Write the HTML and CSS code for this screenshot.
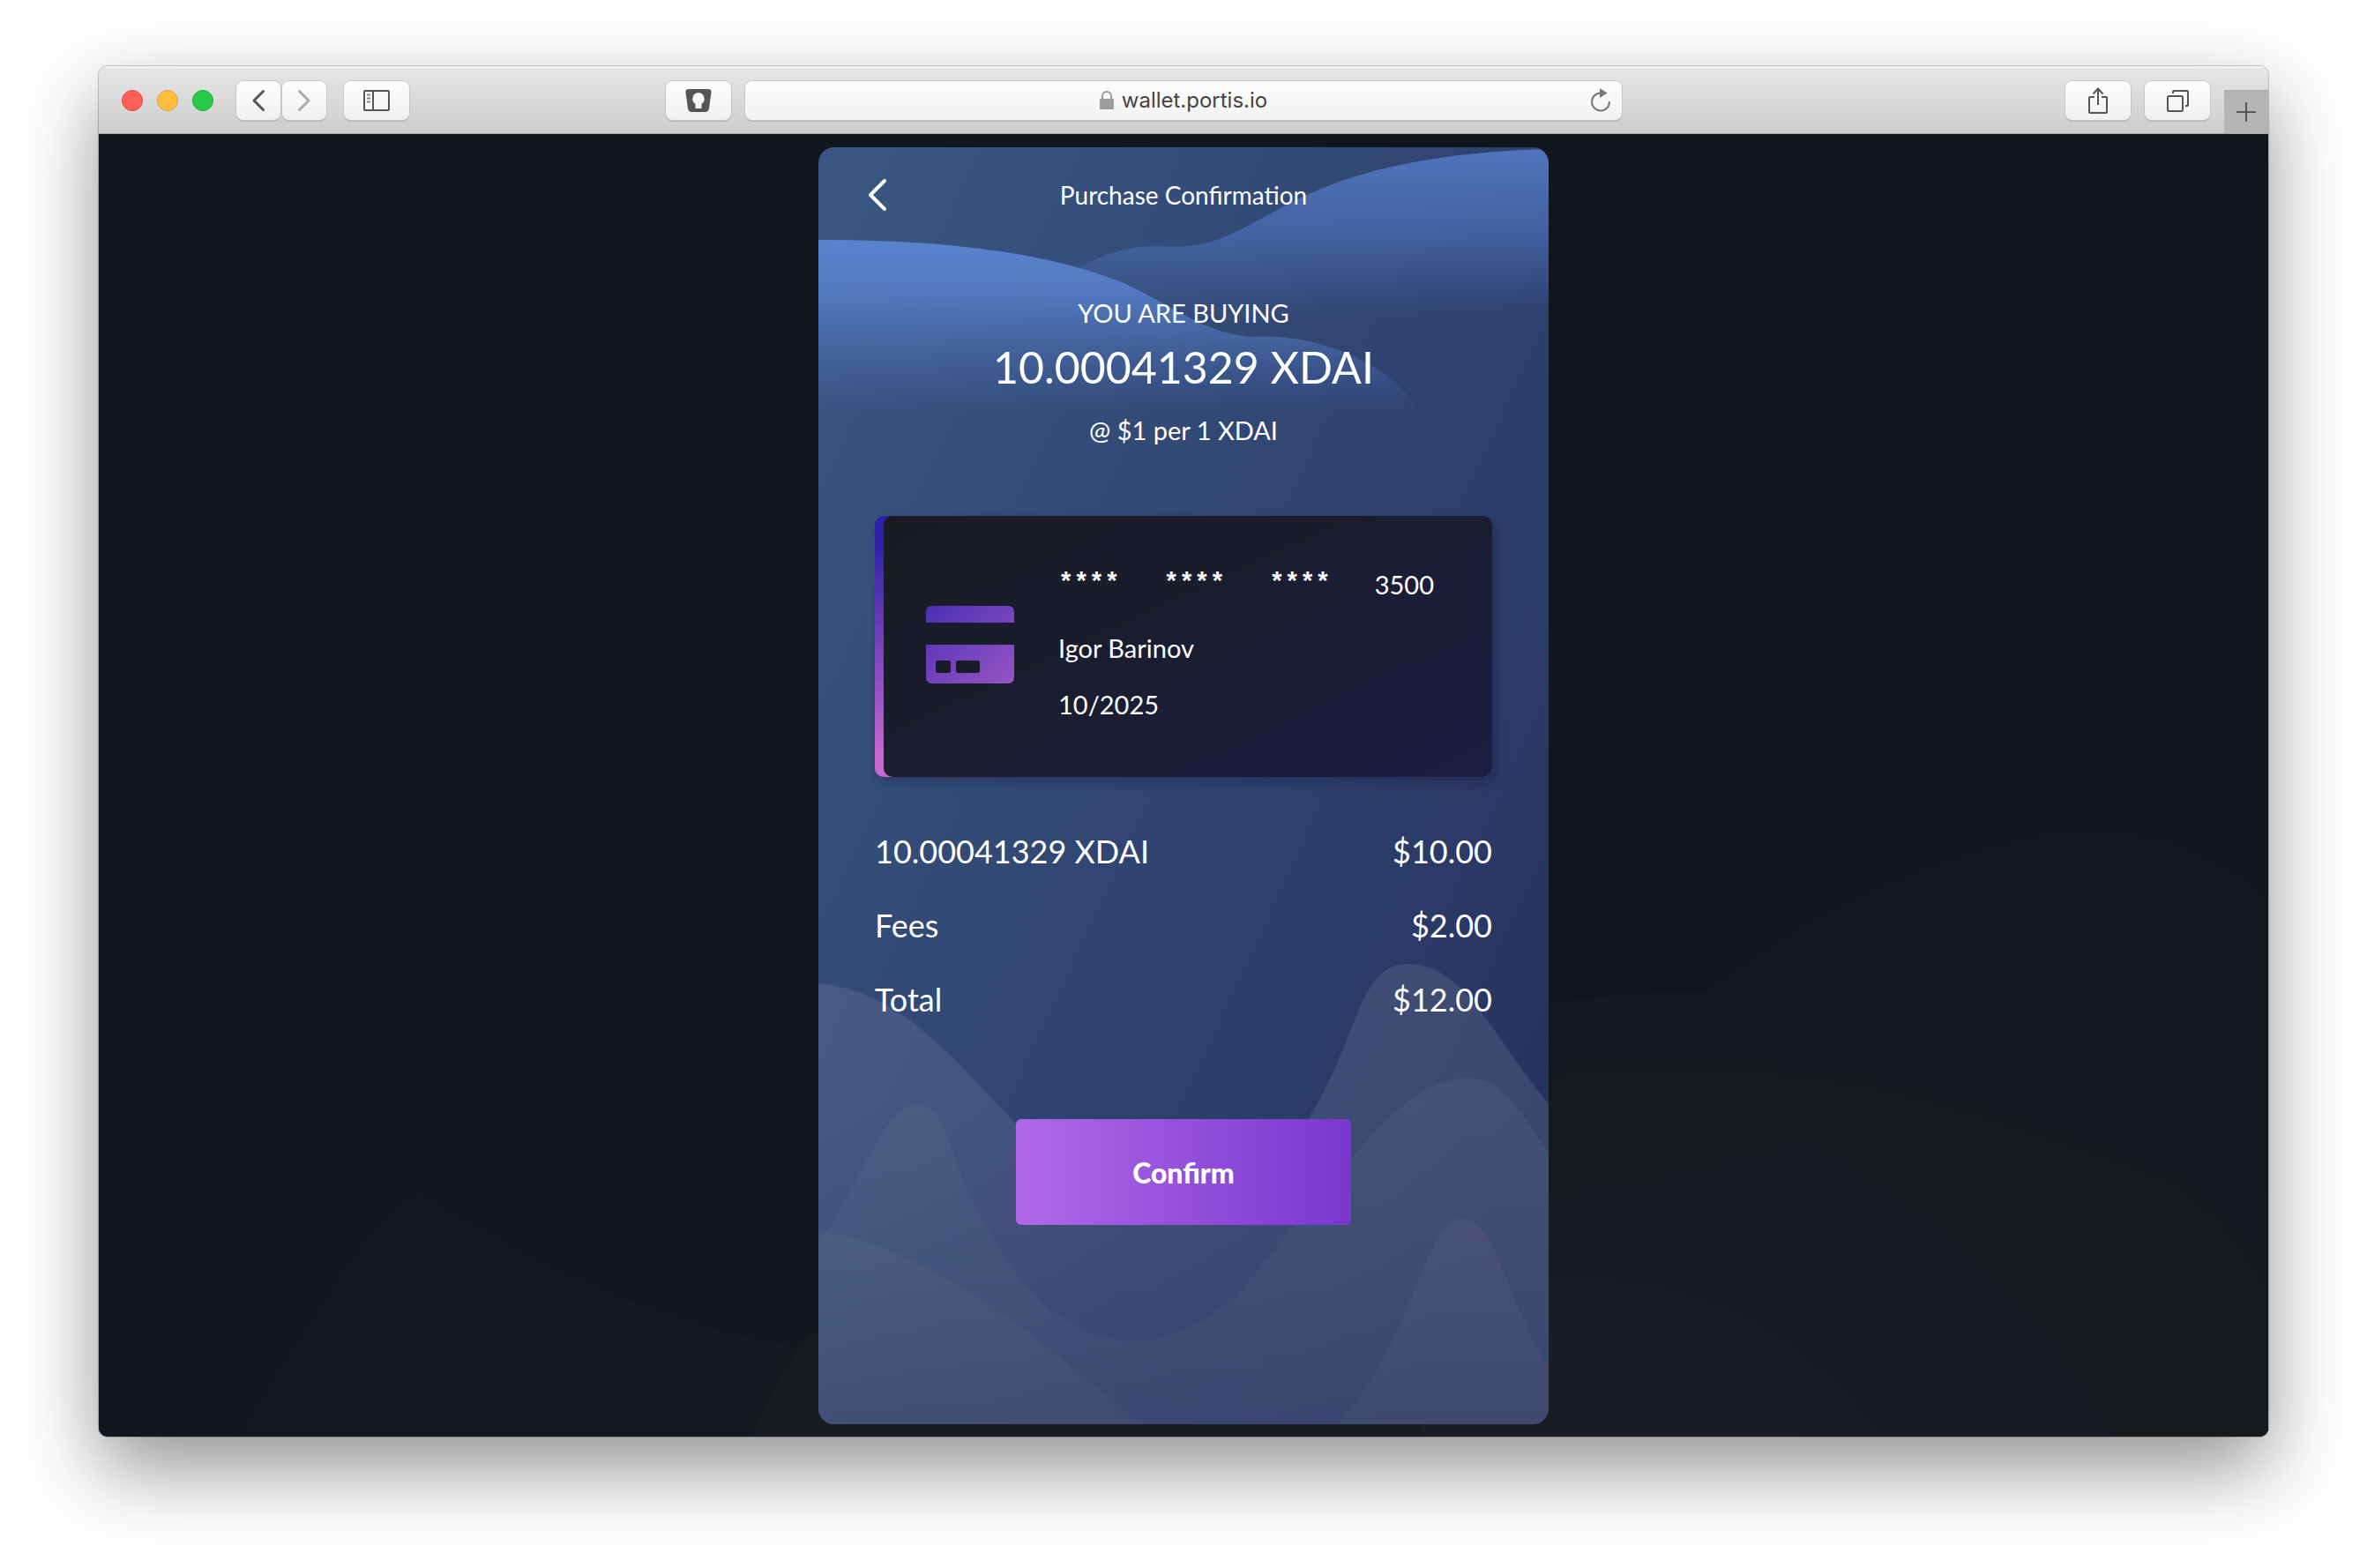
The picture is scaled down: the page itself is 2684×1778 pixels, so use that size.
FILE: index.html
```html
<!DOCTYPE html>
<html lang="en">
<head>
<meta charset="utf-8">
<meta name="viewport" content="width=device-width, initial-scale=1">
<title>Purchase Confirmation</title>
<link rel="stylesheet" href="styles.css">
</head>
<body>
<div class="window">
  <header class="toolbar">
    <div class="toolbar-left">
      <div class="lights">
        <button class="light light-close" aria-label="Close"></button>
        <button class="light light-min" aria-label="Minimize"></button>
        <button class="light light-max" aria-label="Zoom"></button>
      </div>
      <div class="nav">
        <button class="tool tool-nav" aria-label="Back"><svg width="16" height="26" viewBox="0 0 16 26"><path d="M13.500 2.500 3 13l10.500 10.500" class="stroke-nav"/></svg></button>
        <button class="tool tool-nav" aria-label="Forward" disabled><svg width="16" height="26" viewBox="0 0 16 26"><path d="M2.500 2.500 13 13 2.500 23.500" class="stroke-nav stroke-dim"/></svg></button>
      </div>
      <button class="tool" aria-label="Sidebar"><svg width="32" height="26" viewBox="0 0 32 26"><rect x="2" y="2" width="28" height="22" rx="1" class="stroke"/><path d="M12 2v22" class="stroke"/><path d="M5 6.500h4M5 10.500h4M5 14.500h4" class="stroke-thin"/></svg></button>
      <button class="tool tool-key" aria-label="Password manager"><svg width="30" height="26" viewBox="0 0 30 26"><path fill="#555" fill-rule="evenodd" d="M4 0h22q4 0 3.500 4l-2.500 18q-.6 4-4.500 4h-15q-3.900 0-4.500-4L.5 4Q0 0 4 0ZM15 4a7 7 0 0 0-3.500 12.800V22h7v-5.200A7 7 0 0 0 15 4Z"/></svg></button>
    </div>
    <div class="address">
      <label class="address-text">
        <svg width="16" height="22" viewBox="0 0 16 22" aria-label="Secure"><rect y="9" width="16" height="12" rx="1" fill="#9c9c9c"/><path d="M3 10V6a5 5 0 0 1 10 0v4" fill="none" stroke="#9c9c9c" stroke-width="2"/></svg>
        <input class="address-input" type="text" value="wallet.portis.io" aria-label="Address">
      </label>
      <button class="reload" aria-label="Reload"><svg width="24" height="28" viewBox="0 0 24 28"><path d="M12 5.500a10 10 0 1 0 10 9.500" fill="none" stroke="#777" stroke-width="2"/><path d="M11 0v11l8.500-5.500z" fill="#777"/></svg></button>
    </div>
    <div class="toolbar-right">
      <button class="tool" aria-label="Share"><svg width="24" height="32" viewBox="0 0 24 32"><path d="M8 12H3q-1 0-1 1v16q0 1 1 1h18q1 0 1-1V13q0-1-1-1h-5" class="stroke"/><path d="M12 21V3M6.500 8.500 12 2.500l5.500 6" class="stroke"/></svg></button>
      <button class="tool" aria-label="Tabs"><svg width="26" height="26" viewBox="0 0 26 26"><rect x="2" y="8" width="17" height="17" rx="1.500" class="stroke"/><path d="M8 5V3q0-1 1-1h15q1 0 1 1v15q0 1-1 1h-2" class="stroke"/></svg></button>
      <button class="new-tab" aria-label="New tab"><svg width="22" height="22" viewBox="0 0 22 22"><path d="M11 0v22M0 11h22" class="stroke"/></svg></button>
    </div>
  </header>

  <main class="page">
    <svg class="art" viewBox="0 0 2460 1478" preserveAspectRatio="none" aria-hidden="true">
      <path fill="#13171e" d="M1400 1300L1638 1112L1823 971C1890 920 1940 890 2009 858C2090 820 2180 789 2263 789C2340 789 2410 820 2460 867V1478H1400Z"/>
      <path fill="#14181f" d="M1400 1040Q1638 973 1813 973C1900 973 1950 980 2009 994C2080 1008 2140 1020 2194 1037C2250 1075 2290 1110 2326 1145Q2400 1220 2460 1311V1478H1400Z"/>
      <path fill="#14181f" d="M1638 1202Q1760 1185 1850 1160L2051 1093L2244 1006L2379 1117L2460 1202V1478H1638Z"/>
      <path fill="#171a1d" d="M1500 1130Q1620 1061 1712 1061C1780 1056 1840 1056 1903 1065Q1990 1072 2062 1093C2150 1115 2260 1150 2350 1188Q2420 1230 2460 1311V1478H1400Z"/>
      <path fill="#171a22" d="M1500 1215Q1740 1195 1850 1160L1934 1138C2000 1172 2060 1215 2114 1259Q2220 1350 2284 1478H1400Z"/>
      <path fill="#191c22" d="M1500 1300Q1638 1285 1770 1306Q1840 1322 1903 1362Q1970 1405 2024 1478H1400Z"/>
      <path fill="#1a1d24" d="M1500 1310Q1638 1310 1700 1332C1790 1360 1870 1400 1934 1478H1400Z"/>
      <path fill="#12161d" d="M0 1262C40 1215 80 1185 122 1166Q165 1142 213 1142Q262 1142 309 1166C360 1195 395 1218 438 1242C480 1268 510 1285 550 1302Q670 1355 791 1376L900 1390V1478H0Z"/>
      <path fill="#13161d" d="M432 1244Q490 1235 550 1217C640 1194 720 1180 816 1172H900V1400L791 1376Q670 1355 550 1302C510 1285 480 1268 432 1244Z"/>
      <path fill="#13171e" d="M159 1478C190 1420 225 1370 256 1322Q310 1230 363 1199C395 1218 410 1228 438 1242C480 1268 510 1285 550 1302Q670 1355 791 1376L900 1390V1478Z"/>
      <path fill="#14181f" d="M416 1478C440 1410 470 1350 508 1283L550 1302Q670 1355 791 1376L900 1390V1478Z"/>
      <path fill="#181b1f" d="M740 1478Q760 1420 810 1360H1500V1478Z"/>
    </svg>

    <section class="wallet">
      <svg class="art" viewBox="0 0 828 1448" preserveAspectRatio="none" aria-hidden="true">
        <defs>
          <linearGradient id="right" gradientUnits="userSpaceOnUse" x1="0" y1="0" x2="0" y2="194"><stop offset="0" stop-color="#5075bd"/><stop offset=".5" stop-color="#4a6eb6" stop-opacity=".7"/><stop offset="1" stop-color="#426bb0" stop-opacity="0"/></linearGradient>
          <linearGradient id="left" gradientUnits="userSpaceOnUse" x1="0" y1="104" x2="0" y2="300"><stop offset="0" stop-color="#5983ce"/><stop offset=".3" stop-color="#567dc6" stop-opacity=".92"/><stop offset="1" stop-color="#4a70b8" stop-opacity="0"/></linearGradient>
          <linearGradient id="base" x1="0" y1="0" x2="0" y2="1"><stop offset=".3" stop-color="#34466f" stop-opacity="0"/><stop offset="1" stop-color="#303c68" stop-opacity=".5"/></linearGradient>
        </defs>
        <path fill="url(#right)" d="M240 196C262 150 320 112 382 112C400 112 420 114 442 108C492 92 518 68 561 51C630 20 720 5 828 2V200Z"/>
        <path fill="url(#left)" d="M0 105C150 105 260 120 344 153C400 178 440 214 496 215C540 213 575 223 605 236C640 252 665 272 682 302H0Z"/>
        <path fill="#8c92a8" fill-opacity=".21" d="M0 948C90 956 150 1030 222 1105C270 1158 330 1190 390 1190C450 1190 510 1170 556 1101C615 1005 612 926 669 926C730 926 760 1000 828 1085V1448H0Z"/>
        <path fill="#74889a" fill-opacity=".12" d="M0 1243C50 1175 75 1085 112 1085C150 1085 148 1160 190 1221C235 1312 300 1354 358 1354C470 1354 520 1230 604 1148C650 1090 695 1055 737 1055C778 1055 800 1100 828 1141V1448H0Z"/>
        <path fill="#8698a0" fill-opacity=".12" d="M0 1229C100 1237 230 1330 366 1448H0Z"/>
        <path fill="#8f7098" fill-opacity=".18" d="M588 1448C680 1350 685 1215 729 1215C770 1215 780 1310 828 1382V1448Z"/>
        <path fill="url(#base)" d="M0 926H828V1448H0Z"/>
      </svg>

      <div class="wallet-body">
        <div class="wallet-head">
          <button class="back" aria-label="Back"><svg width="22" height="36" viewBox="0 0 22 36"><path d="M19 2 3 18l16 16" fill="none" stroke="#fff" stroke-width="4" stroke-linecap="round" stroke-linejoin="round"/></svg></button>
          <h1 class="title">Purchase Confirmation</h1>
        </div>

        <div class="quote">
          <p class="quote-line">YOU ARE BUYING</p>
          <p class="quote-amount">10.00041329 XDAI</p>
          <p class="quote-line">@ $1 per 1 XDAI</p>
        </div>

        <div class="card">
          <div class="card-face">
            <svg class="card-icon" width="100" height="88" viewBox="0 0 100 88" aria-hidden="true">
              <defs><linearGradient id="cc" x1="0" y1="0" x2="1" y2="1"><stop offset="0" stop-color="#4a30b4"/><stop offset="1" stop-color="#9854c4"/></linearGradient></defs>
              <path fill="url(#cc)" fill-rule="evenodd" d="M0 19V7Q0 0 7 0H93Q100 0 100 7V19ZM0 44H100V80Q100 88 93 88H7Q0 88 0 80ZM13 62Q11 62 11 64V74Q11 76 13 76H26Q28 76 28 74V64Q28 62 26 62ZM36 62Q34 62 34 64V74Q34 76 36 76H59Q61 76 61 74V64Q61 62 59 62Z"/>
            </svg>
            <div class="card-text">
              <div class="card-number"><span class="stars">****</span><span class="stars">****</span><span class="stars">****</span><span>3500</span></div>
              <p class="card-name">Igor Barinov</p>
              <p class="card-date">10/2025</p>
            </div>
          </div>
        </div>

        <table class="costs">
          <tr><th scope="row">10.00041329 XDAI</th><td>$10.00</td></tr>
          <tr><th scope="row">Fees</th><td>$2.00</td></tr>
          <tr><th scope="row">Total</th><td>$12.00</td></tr>
        </table>

        <button class="confirm">Confirm</button>
      </div>
    </section>
  </main>
</div>
</body>
</html>
```
FILE: styles.css
```css
* { box-sizing: border-box; }

body {
  margin: 0;
  padding: 75px 112px 148px;
  background: #fff;
  color: #fff;
  font-family: Lato, "Liberation Sans", sans-serif;
}

h1, p { margin: 0; font-weight: 400; }

button {
  padding: 0;
  border: 0;
  font: inherit;
  color: inherit;
  background: none;
}

svg { display: block; }

.window {
  border-radius: 10px;
  overflow: hidden;
  box-shadow: 0 0 0 1px rgba(0, 0, 0, .2), 0 36px 90px rgba(0, 0, 0, .43);
}

/* Browser toolbar */
.toolbar {
  display: grid;
  grid-template-columns: 1fr minmax(0, 994px) 1fr;
  column-gap: 16px;
  align-items: center;
  height: 77px;
  background: linear-gradient(#e6e6e6, #cdcdcd);
  border-top: 2px solid #f4f4f4;
  border-bottom: 1px solid #a5a5a5;
}

.toolbar-left, .toolbar-right, .lights, .nav { display: flex; align-items: center; }
.toolbar-left { padding-left: 26px; }
.toolbar-right { justify-content: flex-end; gap: 16px; height: 100%; }
.lights { gap: 16px; margin-right: 26px; }
.nav { gap: 2px; margin-right: 20px; }

.light { width: 24px; height: 24px; border-radius: 50%; }
.light-close { background: #ff5f57; border: 1px solid #e24640; }
.light-min { background: #ffbd3e; border: 1px solid #dfa135; }
.light-max { background: #28ca48; border: 1px solid #1dad2c; }

.tool {
  display: flex;
  align-items: center;
  justify-content: center;
  width: 74px;
  height: 44px;
  border-radius: 8px;
  background: linear-gradient(#fdfdfd, #f1f1f1);
  box-shadow: 0 0 0 1px #c6c6c6, 0 2px 0 #b2b2b2;
}
.tool-nav { width: 50px; }
.tool-key { margin-left: auto; }

.stroke, .stroke-nav, .stroke-thin { fill: none; stroke: #555; stroke-width: 2; }
.stroke-nav { stroke-width: 3; stroke-linecap: round; stroke-linejoin: round; }
.stroke-nav.stroke-dim { stroke: #aaa; }
.stroke-thin { stroke: #888; }

.address {
  display: grid;
  grid-template-columns: 48px 1fr 48px;
  align-items: center;
  height: 44px;
  border-radius: 8px;
  background: linear-gradient(#fdfdfd, #f2f2f2);
  box-shadow: 0 0 0 1px #c6c6c6, 0 2px 0 #b2b2b2;
}
.address-text {
  grid-column: 2;
  display: flex;
  align-items: center;
  justify-content: center;
  gap: 9px;
}
.address-input {
  field-sizing: content;
  padding: 0;
  border: 0;
  background: none;
  color: #444;
  font: 400 24px/32px Inter, "Liberation Sans", sans-serif;
}
.reload { justify-self: center; }

.new-tab {
  display: flex;
  align-items: center;
  justify-content: center;
  align-self: flex-end;
  width: 50px;
  height: 49px;
  background: #b5b5b5;
  border-top: 1px solid #a8a8a8;
}

/* Page */
.page {
  position: relative;
  padding: 15px 16px 14px;
  background: #11151c;
  overflow: hidden;
}
.art { position: absolute; inset: 0; width: 100%; height: 100%; }

.wallet {
  position: relative;
  max-width: 828px;
  margin: 0 auto;
  border-radius: 18px;
  overflow: hidden;
  background: linear-gradient(115deg, #3a5784, #324875 40%, #27335f 88%);
}
.wallet-body { position: relative; padding: 0 64px 226px; }

.wallet-head {
  display: grid;
  grid-template-columns: 22px 1fr 22px;
  align-items: center;
  margin: 0 -8px;
  padding: 36px 0;
}
.title { font-size: 28px; line-height: 36px; text-align: center; }

.quote {
  display: flex;
  flex-direction: column;
  align-items: center;
  padding: 62px 0 79px;
}
.quote-line { font-size: 29px; line-height: 36px; }
.quote-amount { padding: 13px 0 24px; font-size: 50px; line-height: 60px; }

.card {
  padding-left: 10px;
  border-radius: 10px;
  background: linear-gradient(#2d21a8 10%, #c867d2 92%);
  box-shadow: 4px 6px 12px rgba(20, 24, 50, .3);
}
.card-face {
  display: flex;
  align-items: center;
  gap: 50px;
  padding: 60px 66px 64px 48px;
  border-radius: 10px;
  background: linear-gradient(155deg, #181b20, #1b1d32 50%, #1b1c42);
}
.card-icon { flex: none; }
.card-text { flex: 1; font-size: 29px; line-height: 36px; }
.card-number { display: flex; justify-content: space-between; }
.stars { font-family: "Liberation Mono", monospace; font-weight: 700; }
.card-name { padding: 36px 0 28px; }

.costs {
  width: 100%;
  margin: 42px 0 94px;
  border-collapse: collapse;
  font-size: 36px;
}
.costs th, .costs td { height: 84px; padding: 0; font-weight: 400; text-align: left; }
.costs td { text-align: right; }

.confirm {
  display: block;
  width: 380px;
  height: 120px;
  margin: 0 auto;
  border-radius: 6px;
  background: linear-gradient(90deg, #b069e8, #7838cf);
  font-size: 32px;
  font-weight: 900;
}
```
